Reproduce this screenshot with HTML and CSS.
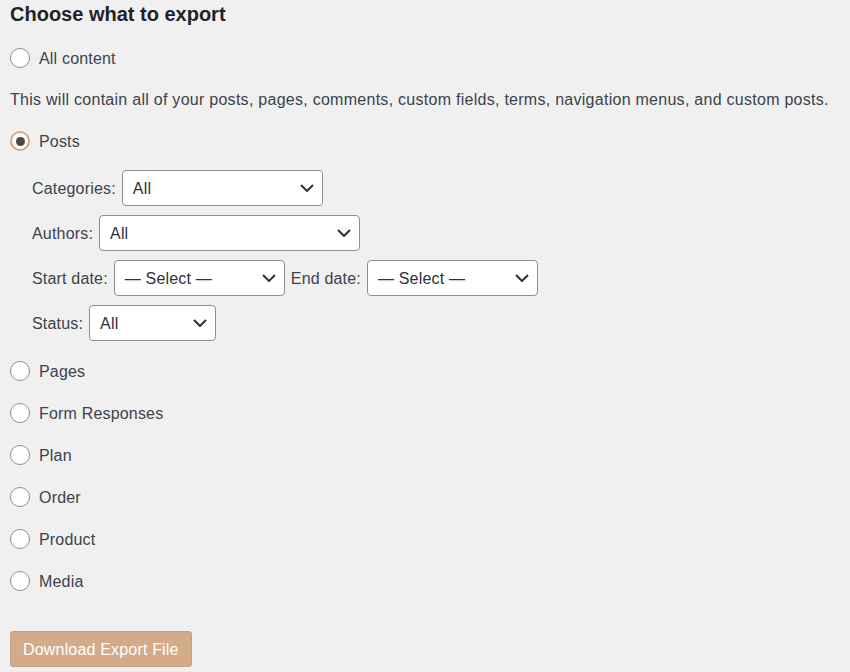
FILE: index.html
```html
<!DOCTYPE html>
<html lang="en">
<head>
<meta charset="utf-8">
<title>Export</title>
<link rel="stylesheet" href="styles.css">
</head>
<body>
<div class="wrap">
  <h2 class="title">Choose what to export</h2>
  <div class="choice"><span class="radio"></span><span class="txt">All content</span></div>
  <p class="desc">This will contain all of your posts, pages, comments, custom fields, terms, navigation menus, and custom posts.</p>
  <div class="choice"><span class="radio checked"></span><span class="txt">Posts</span></div>
  <div class="filters">
    <div class="frow"><span class="txt">Categories:</span><div class="select w-cat"><span class="txt">All</span><svg class="chev" viewBox="0 0 14 8"><path d="M1 1l6 6 6-6"/></svg></div></div>
    <div class="frow"><span class="txt">Authors:</span><div class="select w-auth"><span class="txt">All</span><svg class="chev" viewBox="0 0 14 8"><path d="M1 1l6 6 6-6"/></svg></div></div>
    <div class="frow"><span class="txt">Start date:</span><div class="select w-date"><span class="txt">— Select —</span><svg class="chev" viewBox="0 0 14 8"><path d="M1 1l6 6 6-6"/></svg></div><span class="txt">End date:</span><div class="select w-date"><span class="txt">— Select —</span><svg class="chev" viewBox="0 0 14 8"><path d="M1 1l6 6 6-6"/></svg></div></div>
    <div class="frow"><span class="txt">Status:</span><div class="select w-status"><span class="txt">All</span><svg class="chev" viewBox="0 0 14 8"><path d="M1 1l6 6 6-6"/></svg></div></div>
  </div>
  <div class="choice first-after"><span class="radio"></span><span class="txt">Pages</span></div>
  <div class="choice"><span class="radio"></span><span class="txt">Form Responses</span></div>
  <div class="choice"><span class="radio"></span><span class="txt">Plan</span></div>
  <div class="choice"><span class="radio"></span><span class="txt">Order</span></div>
  <div class="choice"><span class="radio"></span><span class="txt">Product</span></div>
  <div class="choice"><span class="radio"></span><span class="txt">Media</span></div>
  <div class="actions"><span class="button"><span class="txt">Download Export File</span></span></div>
</div>
</body>
</html>
```
FILE: styles.css
```css
html, body {
  margin: 0;
  padding: 0;
  background: #f0f0f1;
}
body {
  font-family: "Liberation Sans", Arial, sans-serif;
  font-size: 16px;
  letter-spacing: 0.18px;
  color: #3c434a;
}
.wrap {
  padding: 0 10px;
  display: flex;
  flex-direction: column;
  align-items: flex-start;
}
.title {
  margin: 0;
  height: 28px;
  line-height: 28px;
  font-size: 20px;
  font-weight: 700;
  letter-spacing: 0;
  color: #1d2327;
}
.txt {
  padding-top: 2px;
}
.choice {
  display: flex;
  align-items: center;
  gap: 9px;
  height: 42px;
}
.title + .choice { margin-top: 9px; }
.radio {
  box-sizing: border-box;
  width: 20px;
  height: 20px;
  border-radius: 50%;
  border: 1px solid #8c8f94;
  background: #fff;
  display: flex;
  align-items: center;
  justify-content: center;
}
.radio.checked {
  border: 2px solid #d4a883;
}
.radio.checked::after {
  content: "";
  width: 9px;
  height: 9px;
  border-radius: 50%;
  background: #4f4740;
}
.desc {
  margin: 9px 0 8px;
  line-height: 24px;
  letter-spacing: 0.27px;
}
.filters {
  margin-top: 8px;
  padding-left: 22px;
  display: flex;
  flex-direction: column;
  gap: 9px;
}
.frow {
  display: flex;
  align-items: center;
  gap: 6px;
  height: 36px;
}
.select {
  box-sizing: border-box;
  height: 36px;
  border: 1px solid #8c8f94;
  border-radius: 4px;
  background: #fff;
  display: flex;
  align-items: center;
  justify-content: space-between;
  padding: 0 8px 0 10px;
  color: #2c3338;
}
.chev {
  width: 14px;
  height: 8px;
  fill: none;
  stroke: #2c3338;
  stroke-width: 2;
}
.w-cat { width: 201px; }
.w-auth { width: 261px; }
.w-date { width: 171px; }
.w-status { width: 127px; }
.first-after { margin-top: 9px; }
.actions {
  margin-top: 29px;
}
.button {
  box-sizing: border-box;
  display: inline-flex;
  align-items: center;
  height: 36px;
  padding: 0 12px;
  background: #d3ab8a;
  border: 1px solid #c9a07f;
  border-radius: 3px;
  color: #fff;
}
```
